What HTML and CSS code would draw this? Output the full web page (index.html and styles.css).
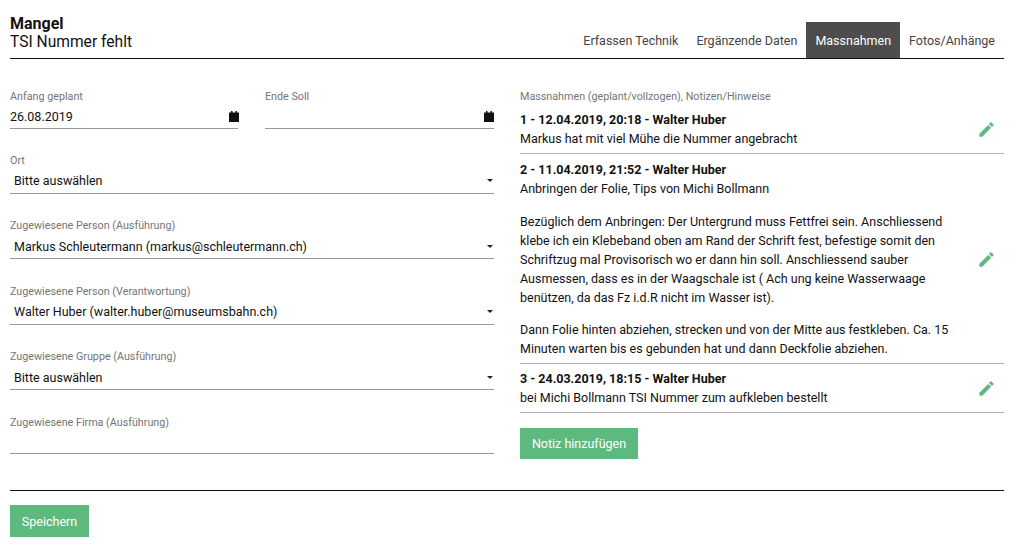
FILE: index.html
```html
<!DOCTYPE html>
<html lang="de">
<head>
<meta charset="utf-8">
<title>Mangel</title>
<link rel="stylesheet" href="styles.css">
</head>
<body>
<header class="top">
  <div class="title">
    <div class="title-main">Mangel</div>
    <div class="title-sub">TSI Nummer fehlt</div>
  </div>
  <nav class="tabs">
    <a class="tab">Erfassen Technik</a>
    <a class="tab">Ergänzende Daten</a>
    <a class="tab active">Massnahmen</a>
    <a class="tab">Fotos/Anhänge</a>
  </nav>
</header>
<main class="cols">
  <section class="left">
    <div class="date-row">
      <div class="field">
        <div class="label">Anfang geplant</div>
        <div class="control date"><span>26.08.2019</span>
          <svg class="cal" viewBox="0 0 10 11"><path d="M2 0h1.500v1.500h3V0H8v1.500h2V11H0V1.500h2z"/></svg></div>
      </div>
      <div class="field">
        <div class="label">Ende Soll</div>
        <div class="control date"><span></span>
          <svg class="cal" viewBox="0 0 10 11"><path d="M2 0h1.500v1.500h3V0H8v1.500h2V11H0V1.500h2z"/></svg></div>
      </div>
    </div>
    <div class="field">
      <div class="label">Ort</div>
      <div class="control select"><span>Bitte auswählen</span><i class="caret"></i></div>
    </div>
    <div class="field">
      <div class="label">Zugewiesene Person (Ausführung)</div>
      <div class="control select"><span>Markus Schleutermann (markus@schleutermann.ch)</span><i class="caret"></i></div>
    </div>
    <div class="field">
      <div class="label">Zugewiesene Person (Verantwortung)</div>
      <div class="control select"><span>Walter Huber (walter.huber@museumsbahn.ch)</span><i class="caret"></i></div>
    </div>
    <div class="field">
      <div class="label">Zugewiesene Gruppe (Ausführung)</div>
      <div class="control select"><span>Bitte auswählen</span><i class="caret"></i></div>
    </div>
    <div class="field">
      <div class="label">Zugewiesene Firma (Ausführung)</div>
      <div class="control control-empty"></div>
    </div>
  </section>
  <section class="right">
    <div class="label notes-label">Massnahmen (geplant/vollzogen), Notizen/Hinweise</div>
    <article class="note">
      <div class="note-body">
        <div class="note-head">1 - 12.04.2019, 20:18 - Walter Huber</div>
        <p>Markus hat mit viel Mühe die Nummer angebracht</p>
      </div>
      <svg class="pen" viewBox="0 0 24 24"><path d="M3 17.250V21h3.750L17.810 9.940l-3.750-3.750L3 17.250zM20.710 7.040a1 1 0 0 0 0-1.410l-2.340-2.340a1 1 0 0 0-1.410 0l-1.830 1.830 3.750 3.750 1.830-1.830z"/></svg>
    </article>
    <article class="note">
      <div class="note-body">
        <div class="note-head">2 - 11.04.2019, 21:52 - Walter Huber</div>
        <p>Anbringen der Folie, Tips von Michi Bollmann</p>
        <p class="para">Bezüglich dem Anbringen: Der Untergrund muss Fettfrei sein. Anschliessend klebe ich ein Klebeband oben am Rand der Schrift fest, befestige somit den Schriftzug mal Provisorisch wo er dann hin soll. Anschliessend sauber Ausmessen, dass es in der Waagschale ist ( Ach ung keine Wasserwaage benützen, da das Fz i.d.R nicht im Wasser ist).</p>
        <p class="para para-last">Dann Folie hinten abziehen, strecken und von der Mitte aus festkleben. Ca. 15 Minuten warten bis es gebunden hat und dann Deckfolie abziehen.</p>
      </div>
      <svg class="pen" viewBox="0 0 24 24"><path d="M3 17.250V21h3.750L17.810 9.940l-3.750-3.750L3 17.250zM20.710 7.040a1 1 0 0 0 0-1.410l-2.340-2.340a1 1 0 0 0-1.410 0l-1.830 1.830 3.750 3.750 1.830-1.830z"/></svg>
    </article>
    <article class="note note-last">
      <div class="note-body">
        <div class="note-head">3 - 24.03.2019, 18:15 - Walter Huber</div>
        <p>bei Michi Bollmann TSI Nummer zum aufkleben bestellt</p>
      </div>
      <svg class="pen" viewBox="0 0 24 24"><path d="M3 17.250V21h3.750L17.810 9.940l-3.750-3.750L3 17.250zM20.710 7.040a1 1 0 0 0 0-1.410l-2.340-2.340a1 1 0 0 0-1.410 0l-1.830 1.830 3.750 3.750 1.830-1.830z"/></svg>
    </article>
    <button class="btn add">Notiz hinzufügen</button>
  </section>
</main>
<footer class="bottom">
  <button class="btn save">Speichern</button>
</footer>
</body>
</html>
```

FILE: styles.css
```css
* { box-sizing: border-box; }
html, body { margin: 0; padding: 0; }
body {
  width: 1020px;
  height: 545px;
  overflow: hidden;
  padding: 0 16px 0 10px;
  background: #fff;
  color: #111;
  font-family: Roboto, "Liberation Sans", sans-serif;
  font-size: 12.500px;
  line-height: 19px;
}
.top {
  height: 59px;
  display: flex;
  justify-content: space-between;
  align-items: flex-end;
  border-bottom: 1px solid #111;
}
.title { padding-top: 14px; align-self: flex-start; }
.title-main { font-size: 16px; font-weight: 700; line-height: 19px; }
.title-sub { font-size: 15.600px; line-height: 18px; }
.tabs { display: flex; }
.tab {
  height: 36px;
  padding: 1px 9px 0;
  display: flex;
  align-items: center;
  color: #444;
}
.tab.active { background: #4d4d4d; color: #fff; }
.cols {
  display: flex;
  justify-content: space-between;
  height: 432px;
  padding-top: 31px;
  border-bottom: 1px solid #111;
}
.left { width: 484px; }
.right { width: 484px; }
.date-row { display: flex; justify-content: space-between; height: 64px; }
.date-row .field { width: 229px; height: auto; }
.date-row .field:first-child .control { width: 228px; }
.date-row .field:first-child .cal { margin-right: -1px; }
.field { height: 65.400px; }
.label { font-size: 10.750px; line-height: 14px; color: #757575; }
.control {
  height: 26px;
  border-bottom: 1px solid #999;
  display: flex;
  align-items: center;
  justify-content: space-between;
}
.control-empty { height: 24.500px; }
.date { height: 25px; }
.select { padding: 0.800px 1px 0 4px; }
.cal { width: 10px; height: 11px; fill: #111; }
.caret {
  width: 0;
  height: 0;
  border-left: 3px solid transparent;
  border-right: 3px solid transparent;
  border-top: 3px solid #222;
}
.note {
  display: flex;
  align-items: center;
  justify-content: space-between;
  border-bottom: 1px solid #b3b3b3;
  padding: 6px 0 5px;
}
.note-last { padding-top: 5px; }
.note-body { width: 440px; }
.note-head { font-weight: 700; }
.note p { margin: 0; }
.note p.para { margin-top: 14px; }
.note p.para-last { margin-top: 13px; }
.pen { width: 19px; height: 19px; fill: #5fb97f; margin-right: 8px; }
.btn {
  display: block;
  border: 0;
  background: #5eb97f;
  color: #fff;
  font: 12.500px Roboto, "Liberation Sans", sans-serif;
  padding: 0;
}
.add { width: 118px; height: 31px; margin-top: 15px; }
.save { width: 79px; height: 32px; margin-top: 14px; }
```
